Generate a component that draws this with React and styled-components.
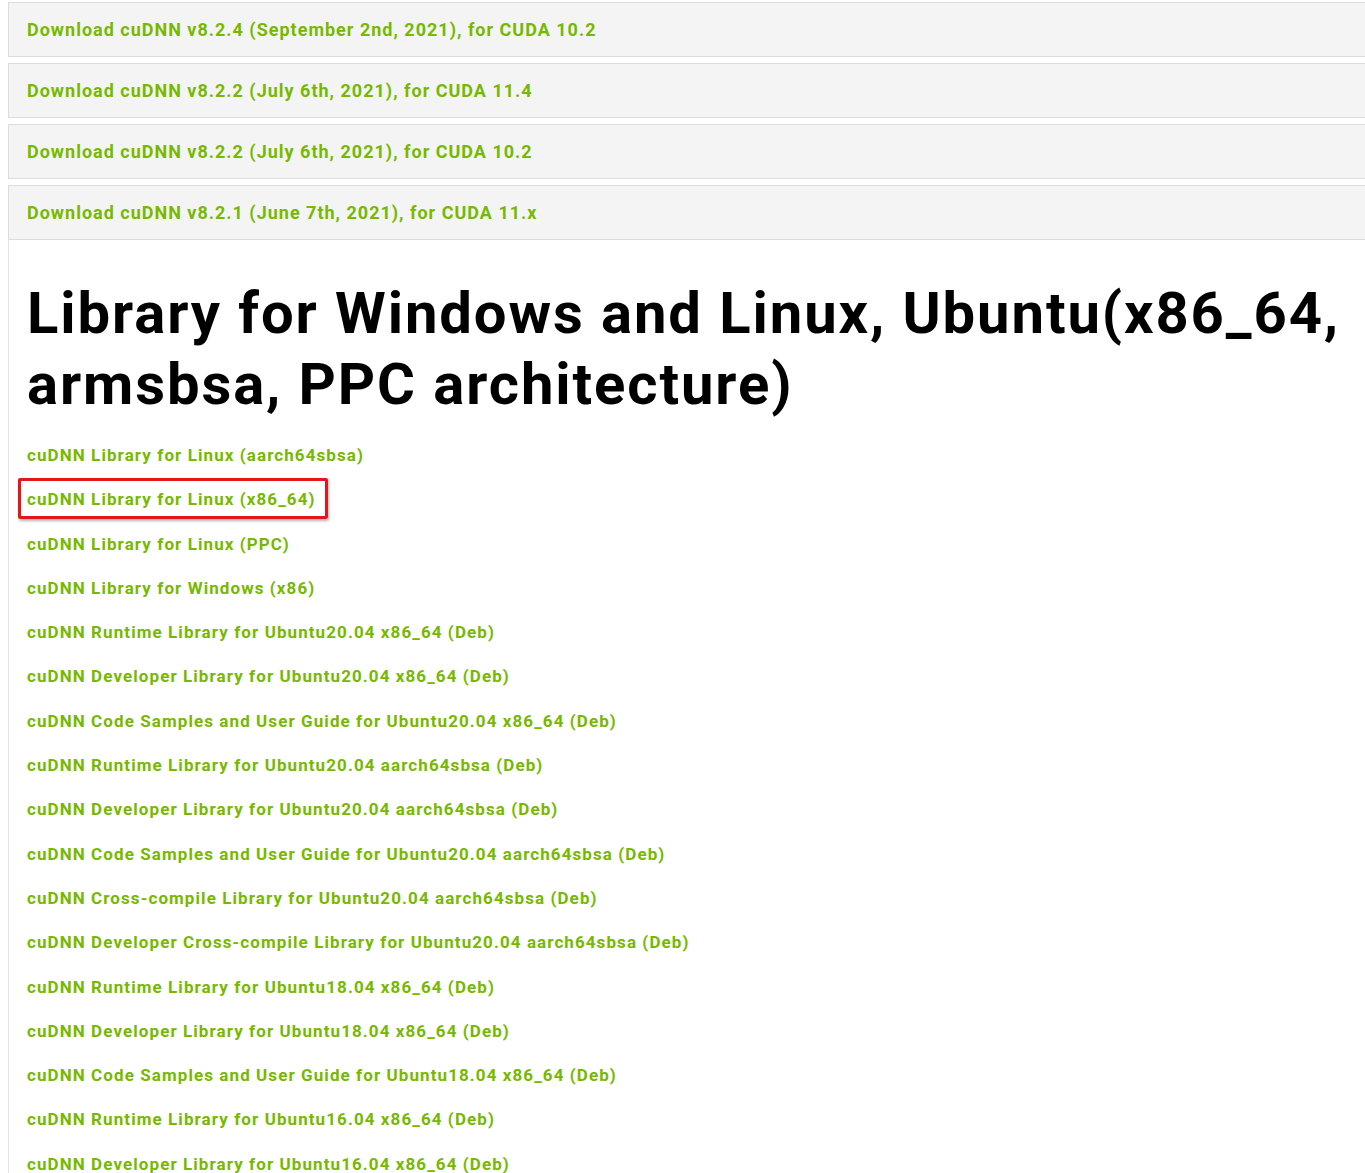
import styled, { createGlobalStyle } from "styled-components";

const GlobalStyle = createGlobalStyle`
  body {
    margin: 0;
    background: #fff;
    font-family: Roboto, "Liberation Sans", sans-serif;
  }
`;

const Page = styled.main`
  padding: 2px 0 0 8px;
  overflow: hidden;
`;

const Panel = styled.div`
  background: #f4f4f4;
  border: 1px solid #dcdcdc;
  border-right: none;
  height: 53px;
  display: flex;
  align-items: center;
  padding-left: 18px;
  margin-bottom: 6px;
  &:last-of-type {
    margin-bottom: 0;
  }
`;

const PanelLink = styled.a`
  color: #76b900;
  font-size: 18px;
  font-weight: 700;
  letter-spacing: 1px;
  text-decoration: none;
  cursor: pointer;
`;

const Body = styled.section`
  border-left: 1px solid #e4e4e4;
  padding: 38px 0 0 18px;
`;

const Heading = styled.h2`
  margin: 0 0 25px;
  font-size: 58px;
  font-weight: 700;
  line-height: 71px;
  color: #000;
  letter-spacing: 1.9px;
`;

const LinkList = styled.ul`
  list-style: none;
  margin: 0;
  padding: 0;
  display: flex;
  flex-direction: column;
  gap: 24.3px;
`;

const Item = styled.li`
  height: 20px;
  display: flex;
  align-items: center;
`;

const Link = styled.a`
  color: #76b900;
  font-size: 17px;
  font-weight: 700;
  letter-spacing: 1.08px;
  text-decoration: none;
  cursor: pointer;
  position: relative;
  ${(p) =>
    p.$marked &&
    `
    &::after {
      content: "";
      position: absolute;
      left: -9px;
      right: -12px;
      top: -11px;
      bottom: -10px;
      border: 3px solid #e3161b;
      border-radius: 2px;
      box-shadow: 1px 2px 3px rgba(0, 0, 0, 0.3);
    }
  `}
`;

const releases = [
  "Download cuDNN v8.2.4 (September 2nd, 2021), for CUDA 10.2",
  "Download cuDNN v8.2.2 (July 6th, 2021), for CUDA 11.4",
  "Download cuDNN v8.2.2 (July 6th, 2021), for CUDA 10.2",
  "Download cuDNN v8.2.1 (June 7th, 2021), for CUDA 11.x",
];

const libraries = [
  "cuDNN Library for Linux (aarch64sbsa)",
  "cuDNN Library for Linux (x86_64)",
  "cuDNN Library for Linux (PPC)",
  "cuDNN Library for Windows (x86)",
  "cuDNN Runtime Library for Ubuntu20.04 x86_64 (Deb)",
  "cuDNN Developer Library for Ubuntu20.04 x86_64 (Deb)",
  "cuDNN Code Samples and User Guide for Ubuntu20.04 x86_64 (Deb)",
  "cuDNN Runtime Library for Ubuntu20.04 aarch64sbsa (Deb)",
  "cuDNN Developer Library for Ubuntu20.04 aarch64sbsa (Deb)",
  "cuDNN Code Samples and User Guide for Ubuntu20.04 aarch64sbsa (Deb)",
  "cuDNN Cross-compile Library for Ubuntu20.04 aarch64sbsa (Deb)",
  "cuDNN Developer Cross-compile Library for Ubuntu20.04 aarch64sbsa (Deb)",
  "cuDNN Runtime Library for Ubuntu18.04 x86_64 (Deb)",
  "cuDNN Developer Library for Ubuntu18.04 x86_64 (Deb)",
  "cuDNN Code Samples and User Guide for Ubuntu18.04 x86_64 (Deb)",
  "cuDNN Runtime Library for Ubuntu16.04 x86_64 (Deb)",
  "cuDNN Developer Library for Ubuntu16.04 x86_64 (Deb)",
];

const App = () => {
  return (
    <>
      <GlobalStyle />
      <Page>
        {releases.map((r, i) => (
          <Panel key={i}>
            <PanelLink>{r}</PanelLink>
          </Panel>
        ))}
        <Body>
          <Heading>
            Library for Windows and Linux, Ubuntu(x86_64,
            <br />
            armsbsa, PPC architecture)
          </Heading>
          <LinkList>
            {libraries.map((l, i) => (
              <Item key={i}>
                <Link $marked={i === 1}>{l}</Link>
              </Item>
            ))}
          </LinkList>
        </Body>
      </Page>
    </>
  );
};

export default App;
